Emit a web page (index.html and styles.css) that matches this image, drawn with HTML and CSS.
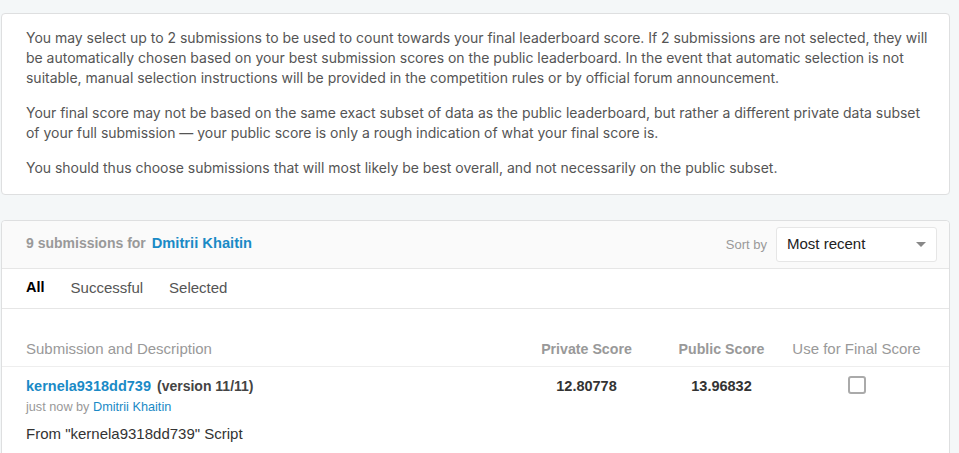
FILE: index.html
```html
<!DOCTYPE html>
<html>
<head>
<meta charset="utf-8">
<link rel="stylesheet" href="styles.css">
</head>
<body>
<div class="page">
  <section class="card info">
    <p>You may select up to 2 submissions to be used to count towards your final leaderboard score. If 2 submissions are not selected, they will be automatically chosen based on your best submission scores on the public leaderboard. In the event that automatic selection is not suitable, manual selection instructions will be provided in the competition rules or by official forum announcement.</p>
    <p>Your final score may not be based on the same exact subset of data as the public leaderboard, but rather a different private data subset of your full submission — your public score is only a rough indication of what your final score is.</p>
    <p>You should thus choose submissions that will most likely be best overall, and not necessarily on the public subset.</p>
  </section>

  <section class="card subs">
    <header class="subs-head">
      <div class="count">9 submissions for <a class="user">Dmitrii Khaitin</a></div>
      <div class="sort">
        <span class="sort-label">Sort by</span>
        <div class="select">
          <span>Most recent</span>
          <span class="caret"></span>
        </div>
      </div>
    </header>
    <nav class="tabs">
      <span class="tab active">All</span>
      <span class="tab">Successful</span>
      <span class="tab">Selected</span>
    </nav>
    <div class="grid colhead">
      <div class="c-desc">Submission and Description</div>
      <div class="c-num strong">Private Score</div>
      <div class="c-num strong">Public Score</div>
      <div class="c-num">Use for Final Score</div>
    </div>
    <div class="grid row">
      <div class="c-desc">
        <div class="title"><a class="link">kernela9318dd739</a> <span class="ver">(version 11/11)</span></div>
        <div class="meta">just now by <a class="link-light">Dmitrii Khaitin</a></div>
        <div class="desc">From "kernela9318dd739" Script</div>
      </div>
      <div class="c-num score">12.80778</div>
      <div class="c-num score">13.96832</div>
      <div class="c-num"><span class="checkbox"></span></div>
    </div>
  </section>
</div>
</body>
</html>
```

FILE: styles.css
```css
html, body {
  margin: 0;
  padding: 0;
  background: #f4f7f8;
  overflow: hidden;
}
.page {
  padding: 13px 0 0 1px;
  width: 949px;
  display: flex;
  flex-direction: column;
  gap: 25px;
}
.card {
  background: #fff;
  border: 1px solid #dedfe0;
  border-radius: 4px;
}
.info {
  padding: 14px 20px 16px 24px;
  font-family: Inter, "Liberation Sans", sans-serif;
  font-size: 14px;
  letter-spacing: -0.02px;
  line-height: 20px;
  color: #555;
}
.info p {
  margin: 0 0 15px;
}
.info p:last-child {
  margin-bottom: 0;
}
.subs {
  font-family: "Liberation Sans", Arial, sans-serif;
  font-size: 15px;
  color: #333;
  height: 260px;
}
.subs-head {
  display: flex;
  justify-content: space-between;
  align-items: center;
  background: #fafafa;
  border-bottom: 1px solid #e6e6e6;
  border-radius: 4px 4px 0 0;
  height: 47px;
  padding: 0 12px 0 24px;
}
.count {
  color: #999;
  font-weight: bold;
  font-size: 14px;
  margin-top: -4px;
}
.user {
  color: #1a8ac6;
  margin-left: 2px;
  font-size: 14.7px;
}
.sort {
  display: flex;
  align-items: center;
  gap: 9px;
}
.sort-label {
  color: #999;
  font-size: 13px;
}
.select {
  width: 139px;
  padding: 0 10px 2px 10px;
  background: #fff;
  border: 1px solid #e6e6e6;
  border-radius: 3px;
  display: flex;
  align-items: center;
  justify-content: space-between;
  color: #222;
  font-size: 15px;
  height: 31px;
}
.caret {
  width: 0;
  height: 0;
  border-left: 5px solid transparent;
  border-right: 5px solid transparent;
  border-top: 5px solid #888;
  margin-top: 2px;
}
.tabs {
  display: flex;
  gap: 26px;
  align-items: center;
  padding: 0 24px 3px;
  height: 36px;
  border-bottom: 1px solid #e6e6e6;
  color: #555;
}
.tab.active {
  color: #000;
  font-weight: bold;
  font-size: 14.5px;
}
.grid {
  display: grid;
  grid-template-columns: 1fr 135px 135px 135px;
  padding: 0 25px 0 24px;
}
.colhead {
  color: #999;
  height: 57px;
  align-items: end;
  border-bottom: 1px solid #eee;
}
.colhead > div {
  padding-bottom: 9px;
}
.colhead .strong {
  font-weight: bold;
  font-size: 14.2px;
}
.c-num {
  text-align: center;
}
.row {
  padding-top: 10px;
}
.title {
  font-weight: bold;
  line-height: 18px;
  font-size: 14.5px;
}
.link {
  color: #1a8ac6;
}
.ver {
  color: #444;
  font-size: 14px;
  margin-left: 2px;
}
.meta {
  font-size: 12.7px;
  color: #999;
  margin-top: 4px;
  line-height: 16px;
}
.link-light {
  color: #1a8ac6;
}
.desc {
  margin-top: 10px;
  line-height: 18px;
  color: #333;
}
.score {
  font-weight: bold;
  font-size: 14.5px;
  color: #333;
  line-height: 18px;
}
.checkbox {
  display: inline-block;
  width: 14px;
  height: 14px;
  border: 2px solid #aaa;
  border-radius: 3px;
  margin-top: -1px;
}
```
